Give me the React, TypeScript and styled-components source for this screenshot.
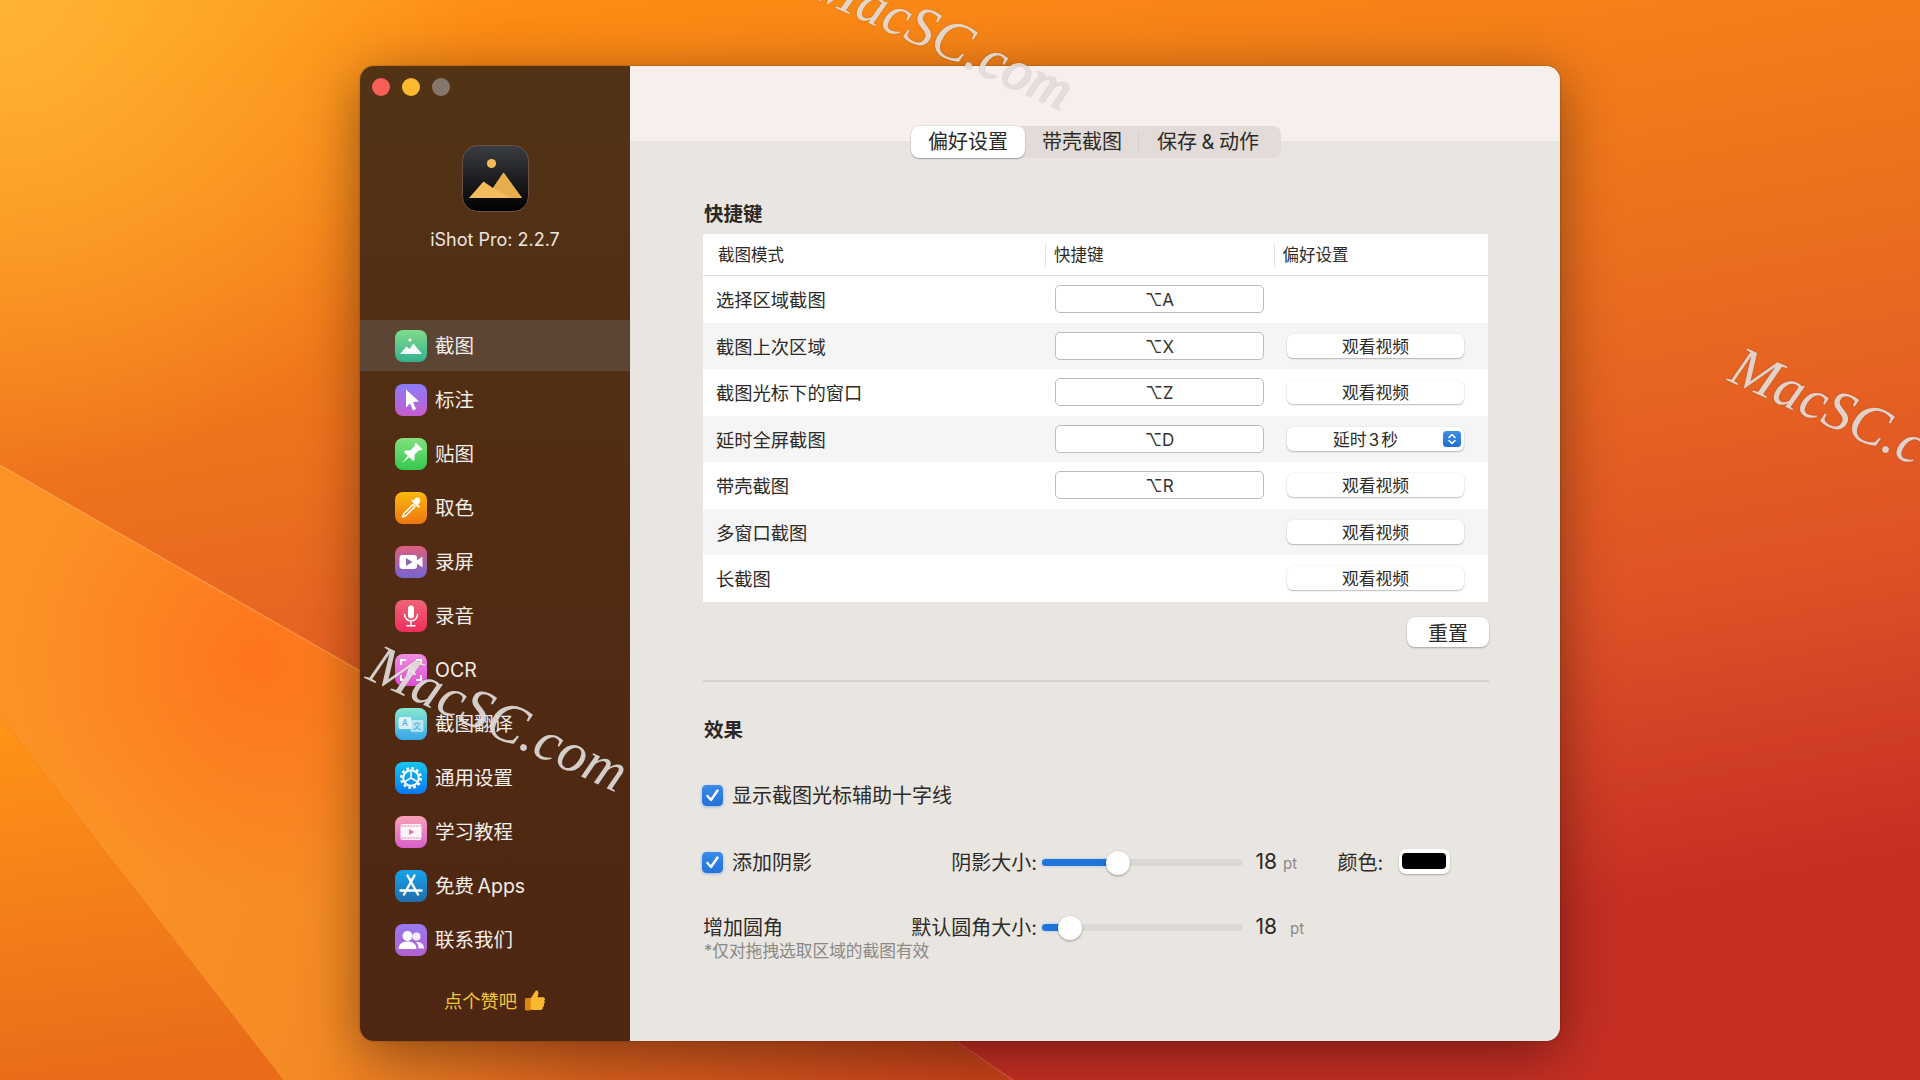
import React from "react";
import styled, { createGlobalStyle } from "styled-components";

const FONT = `Inter, "Noto Sans CJK SC", "DejaVu Sans", sans-serif`;

const Global = createGlobalStyle`
  html, body { margin: 0; padding: 0; background: #d9661f; }
  * { box-sizing: border-box; }
  #root { width: 1920px; height: 1080px; }
`;

const Page = styled.div`
  position: relative;
  width: 1920px;
  height: 1080px;
  overflow: hidden;
  padding: 66px 0 0 360px;
  font-family: ${FONT};
  color: #2d2a28;
`;

const WallpaperSvg = styled.svg`
  position: absolute;
  inset: 0;
  display: block;
`;

const Window = styled.div`
  position: relative;
  display: flex;
  width: 1200px;
  height: 975px;
  border-radius: 14px;
  overflow: hidden;
  box-shadow: 0 12px 55px rgba(0, 0, 0, 0.42), 0 0 2px rgba(0, 0, 0, 0.35);
`;

const Sidebar = styled.aside`
  width: 270px;
  flex: none;
  display: flex;
  flex-direction: column;
  align-items: stretch;
  background: linear-gradient(180deg, #523315 0%, #512c13 45%, #4e2612 100%);
  color: #f2ece6;
`;

const TrafficLights = styled.div`
  display: flex;
  gap: 12px;
  padding: 12px 0 0 12px;
`;

const Light = styled.span<{ $color: string }>`
  width: 18px;
  height: 18px;
  border-radius: 50%;
  background: ${(p) => p.$color};
`;

const LogoWrap = styled.div`
  margin: 49px auto 0;
  width: 67px;
  height: 67px;
`;

const AppName = styled.div`
  margin-top: 16px;
  height: 24px;
  line-height: 24px;
  text-align: center;
  font-size: 18px;
  color: #ece6e0;
`;

const Nav = styled.nav`
  margin-top: 67.5px;
  display: flex;
  flex-direction: column;
  gap: 3px;
`;

const NavItem = styled.div<{ $active?: boolean }>`
  height: 51px;
  display: flex;
  align-items: center;
  gap: 8px;
  padding: 1.5px 0 0 35px;
  font-size: 19.5px;
  line-height: 24px;
  word-spacing: -2px;
  color: #f3eee9;
  background: ${(p) => (p.$active ? "#5d4536" : "transparent")};
`;

const IconTile = styled.span<{ $from: string; $to: string }>`
  width: 32px;
  height: 32px;
  flex: none;
  border-radius: 8px;
  display: block;
  background: linear-gradient(180deg, ${(p) => p.$from}, ${(p) => p.$to});
  svg { display: block; }
`;

const Like = styled.div`
  margin-top: 23px;
  display: flex;
  align-items: center;
  justify-content: center;
  gap: 6px;
  height: 24px;
  font-size: 18.3px;
  color: #f3c63d;
`;

const Main = styled.main`
  flex: 1;
  display: flex;
  flex-direction: column;
  padding: 60px 71px 0 73px;
  background: linear-gradient(180deg, #f6efec 0, #f6efec 75px, #e9e5e1 75px);
`;

const Tabs = styled.div`
  align-self: center;
  display: flex;
  align-items: center;
  width: 370px;
  height: 32px;
  border-radius: 8px;
  background: #e2dbd7;
`;

const Tab = styled.div<{ $active?: boolean; $w: number; $pr?: number }>`
  width: ${(p) => p.$w}px;
  height: 32px;
  padding-right: ${(p) => p.$pr ?? 0}px;
  display: flex;
  align-items: center;
  justify-content: center;
  font-size: 20px;
  line-height: 32px;
  word-spacing: -1px;
  border-radius: 8px;
  background: ${(p) => (p.$active ? "#fff" : "transparent")};
  box-shadow: ${(p) => (p.$active ? "0 1px 1px rgba(0,0,0,.28), 0 0 0 .5px rgba(0,0,0,.1)" : "none")};
`;

const TabSep = styled.span`
  width: 1px;
  height: 18px;
  margin-left: -1px;
  background: #d2cbc7;
`;

const SectionTitle = styled.h2<{ $top: number }>`
  margin: ${(p) => p.$top}px 0 0;
  padding-left: 1px;
  height: 24px;
  line-height: 24px;
  font-size: 19.5px;
  font-weight: 700;
  color: #2a2725;
`;

const Table = styled.div`
  margin: 8px 1px 0 0;
  background: #fff;
`;

const HeadRow = styled.div`
  height: 42px;
  display: grid;
  grid-template-columns: 342px 228.5px 1fr;
  align-items: center;
  border-bottom: 1px solid #dedcda;
  font-size: 16.5px;
`;

const HeadCell = styled.div<{ $first?: boolean }>`
  height: 24px;
  line-height: 24px;
  padding-left: ${(p) => (p.$first ? "15px" : "8px")};
  border-left: ${(p) => (p.$first ? "none" : "1px solid #e6e4e2")};
`;

const Row = styled.div<{ $striped: boolean }>`
  height: 46.5px;
  display: grid;
  grid-template-columns: 352px 232px 177px;
  align-items: center;
  background: ${(p) => (p.$striped ? "#f5f5f5" : "#fff")};
`;

const RowName = styled.div`
  padding: 2px 0 0 13px;
  font-size: 18.3px;
  line-height: 24px;
`;

const Field = styled.div`
  width: 209px;
  height: 28px;
  padding: 2px 0 0 0;
  display: flex;
  align-items: center;
  justify-content: center;
  background: #fff;
  border: 1.5px solid #bdbcbb;
  border-radius: 5px;
  font-size: 17px;
  color: #333;
`;

const SmallButton = styled.div`
  position: relative;
  width: 177px;
  height: 24px;
  display: flex;
  align-items: center;
  justify-content: center;
  background: #fff;
  border-radius: 6px;
  font-size: 16.8px;
  color: #2d2a28;
  box-shadow: 0 1px 1.5px rgba(0, 0, 0, 0.24), 0 0 0 0.5px rgba(0, 0, 0, 0.06);
`;

const SelectButton = styled(SmallButton)`
  padding-right: 20px;
  word-spacing: -2.5px;
`;

const Stepper = styled.span`
  position: absolute;
  right: 3px;
  top: 4px;
  width: 18px;
  height: 16px;
  border-radius: 3.5px;
  background: linear-gradient(180deg, #3d8ee8, #1f6fd2);
  svg { display: block; }
`;

const ResetButton = styled.div`
  align-self: flex-end;
  margin-top: 15.5px;
  width: 82px;
  height: 30px;
  display: flex;
  align-items: center;
  justify-content: center;
  background: #fff;
  border-radius: 8px;
  font-size: 20px;
  box-shadow: 0 1px 2px rgba(0, 0, 0, 0.28), 0 0 0 0.5px rgba(0, 0, 0, 0.05);
`;

const Divider = styled.div`
  margin-top: 33px;
  height: 1.5px;
  background: #d6d1cd;
`;

const SettingRow = styled.div<{ $top: number }>`
  margin-top: ${(p) => p.$top}px;
  height: 24px;
  display: flex;
  align-items: center;
  font-size: 20px;
  line-height: 24px;
`;

const LeftGroup = styled.div`
  width: 334px;
  flex: none;
  display: flex;
  align-items: center;
  justify-content: space-between;
`;

const CheckGroup = styled.div`
  display: flex;
  align-items: center;
  gap: 9px;
`;

const CheckBox = styled.span`
  width: 21px;
  height: 21px;
  margin-left: -1px;
  border-radius: 4.5px;
  background: linear-gradient(180deg, #3b8bea, #2272d8);
  box-shadow: 0 1px 3px rgba(40, 120, 225, 0.45);
  svg { display: block; }
`;

const SliderTrack = styled.div`
  position: relative;
  margin-left: 5px;
  width: 201px;
  height: 7px;
  flex: none;
  border-radius: 4px;
  background: #dcd8d5;
`;

const SliderFill = styled.div`
  height: 7px;
  border-radius: 4px;
  background: #1f74da;
  box-shadow: 0 0 3px rgba(70, 150, 240, 0.45);
`;

const SliderThumb = styled.div`
  position: absolute;
  top: -8.5px;
  width: 24px;
  height: 24px;
  margin-left: -12px;
  border-radius: 50%;
  background: #fff;
  box-shadow: 0 1px 2.5px rgba(0, 0, 0, 0.35);
`;

const ValueBlock = styled.div`
  margin-left: 12.5px;
  width: 82px;
  flex: none;
  display: flex;
  align-items: baseline;
  font-size: 21px;
`;

const Unit = styled.span<{ $gap: number }>`
  margin-left: ${(p) => p.$gap}px;
  font-size: 15px;
  color: #8c8987;
`;

const ColorWell = styled.div`
  margin: -2px 0 0 16px;
  width: 51px;
  height: 25px;
  padding: 4px 4px 5px 3px;
  background: #fff;
  border-radius: 7px;
  box-shadow: 0 1px 2px rgba(0, 0, 0, 0.28);
`;

const ColorSwatch = styled.div`
  height: 16px;
  border-radius: 4px;
  background: #000;
`;

const Note = styled.div`
  margin-top: 0;
  padding-left: 1px;
  height: 22px;
  line-height: 22px;
  font-size: 16.7px;
  color: #8b8886;
`;

const Watermark = styled.span<{ $x: number; $y: number }>`
  position: absolute;
  left: ${(p) => p.$x}px;
  top: ${(p) => p.$y}px;
  transform: rotate(24.5deg);
  transform-origin: 0 100%;
  font-family: "Liberation Serif", serif;
  font-style: italic;
  font-size: 57px;
  line-height: 60px;
  white-space: nowrap;
  color: rgba(236, 232, 229, 0.86);
  text-shadow: 0 0 1.5px rgba(60, 50, 45, 0.4);
  pointer-events: none;
`;

const Wallpaper = () => (
  <WallpaperSvg width="1920" height="1080" viewBox="0 0 1920 1080">
    <defs>
      <linearGradient id="wpBase" x1="0" y1="0" x2="0.32" y2="1">
        <stop offset="0" stopColor="#ff9a18" />
        <stop offset="0.1" stopColor="#fc8b14" />
        <stop offset="0.45" stopColor="#ec701e" />
        <stop offset="0.75" stopColor="#df5226" />
        <stop offset="1" stopColor="#c62f24" />
      </linearGradient>
      <radialGradient id="wpGlow" gradientUnits="userSpaceOnUse" cx="0" cy="0" r="480">
        <stop offset="0" stopColor="#ffb434" />
        <stop offset="1" stopColor="#ffb434" stopOpacity="0" />
      </radialGradient>
      <linearGradient id="wpBand" gradientUnits="userSpaceOnUse" x1="120" y1="800" x2="960" y2="1070">
        <stop offset="0" stopColor="#fb9226" />
        <stop offset="0.3" stopColor="#f48a24" />
        <stop offset="0.6" stopColor="#d9601e" />
        <stop offset="1" stopColor="#c8431a" />
      </linearGradient>
      <radialGradient id="wpBandHot" gradientUnits="userSpaceOnUse" cx="260" cy="660" r="240">
        <stop offset="0" stopColor="#ff741c" />
        <stop offset="1" stopColor="#ff741c" stopOpacity="0" />
      </radialGradient>
      <linearGradient id="wpLow" x1="0" y1="0" x2="0.1" y2="1">
        <stop offset="0" stopColor="#ff9517" />
        <stop offset="1" stopColor="#ea6c1a" />
      </linearGradient>
    </defs>
    <rect width="1920" height="1080" fill="url(#wpBase)" />
    <rect width="1920" height="1080" fill="url(#wpGlow)" />
    <polygon points="0,465 500,750 1013,1080 283,1080 0,716" fill="url(#wpBand)" />
    <polygon points="0,465 500,750 1013,1080 283,1080 0,716" fill="url(#wpBandHot)" />
    <polygon points="0,716 283,1080 0,1080" fill="url(#wpLow)" />
    <line x1="0" y1="465" x2="360" y2="671" stroke="#ffc890" strokeOpacity="0.35" strokeWidth="1.2" />
    <line x1="957" y1="1042" x2="1013" y2="1080" stroke="#ffa080" strokeOpacity="0.35" strokeWidth="1.2" />
  </WallpaperSvg>
);

const AppLogo = () => (
  <svg width="67" height="67" viewBox="0 0 67 67">
    <defs>
      <linearGradient id="lgBg" x1="0" y1="0" x2="0" y2="1">
        <stop offset="0" stopColor="#3a3d42" />
        <stop offset="0.55" stopColor="#1a1b1d" />
        <stop offset="1" stopColor="#000" />
      </linearGradient>
    </defs>
    <rect x="0.5" y="0.5" width="66" height="66" rx="15" fill="url(#lgBg)" stroke="#6b5140" />
    <circle cx="29.5" cy="18.5" r="4.6" fill="#f4b95a" />
    <path d="M7 53 L21.5 36.5 L31 43 L41.5 27.5 L60 53 Z" fill="#f5bc5c" />
    <path d="M41.5 27.5 L60 53 L49 53 L31 43 Z" fill="#e7ad4c" />
  </svg>
);

const S = { width: 32, height: 32, viewBox: "0 0 32 32" };

const IconShot = () => (
  <svg {...S}>
    <circle cx="15" cy="10" r="1.6" fill="#fff" />
    <path d="M5 24 L11.5 16.5 L14.5 19 L18.5 13.5 L27 24 Z" fill="#fff" fillOpacity="0.95" />
  </svg>
);
const IconCursor = () => (
  <svg {...S}>
    <path d="M11 5.5 L24 17.5 L18 18 L21 25 L18 26.5 L15 19.5 L11 23.5 Z" fill="#fff" />
  </svg>
);
const IconPin = () => (
  <svg {...S}>
    <g transform="rotate(45 16 16)" fill="#fff">
      <path d="M11.5 4.5 h9 v2 l-1.5 1 v6.5 l3.5 3.5 v2 H9.5 v-2 l3.5-3.5 V7.5 l-1.5-1 z" />
      <path d="M15 19.5 h2 L16 29 z" />
    </g>
  </svg>
);
const IconDropper = () => (
  <svg {...S}>
    <path d="M18 12.5 L8.8 21.7 L7.5 25 L10.8 23.7 L20 14.5 Z" fill="none" stroke="#fff" strokeWidth="1.5" strokeLinejoin="round" />
    <path d="M16.5 9 L23.5 16 L25 14.5 L23 12.5 C26 10.5 25.5 7 24 6 C22.5 5 20 5.5 19 8.5 L17.5 7.5 Z" fill="#fff" />
  </svg>
);
const IconVideo = () => (
  <svg {...S}>
    <rect x="4.5" y="9" width="17.5" height="14" rx="3" fill="#fff" />
    <path d="M22 14.5 L27.5 10.5 V21.5 L22 17.5 Z" fill="#fff" />
    <path d="M11 12 L17.5 16 L11 20 Z" fill="#8a6cb0" />
  </svg>
);
const IconMic = () => (
  <svg {...S}>
    <rect x="13" y="5.5" width="6" height="13" rx="3" fill="#fff" />
    <path d="M9.5 14.5 a6.5 6.5 0 0 0 13 0 M16 21 V25.5 M12 25.8 H20" fill="none" stroke="#fff" strokeWidth="1.6" strokeLinecap="round" />
  </svg>
);
const IconOcr = () => (
  <svg {...S}>
    <path d="M6 11 V6 H11 M21 6 H26 V11 M26 21 V26 H21 M11 26 H6 V21" fill="none" stroke="#fff" strokeWidth="2" />
    <text x="16" y="21" textAnchor="middle" fontSize="13" fontFamily="Inter, sans-serif" fontWeight="700" fill="#fff">A</text>
  </svg>
);
const IconTranslate = () => (
  <svg {...S}>
    <rect x="3.5" y="9" width="13" height="12" rx="2" fill="#fff" fillOpacity="0.75" />
    <rect x="15.5" y="12" width="13" height="12" rx="2" fill="#fff" fillOpacity="0.55" />
    <text x="10" y="18" textAnchor="middle" fontSize="8.5" fontFamily="Inter, sans-serif" fill="#4aa4d8">A</text>
    <text x="22" y="21" textAnchor="middle" fontSize="8" fontFamily="'Noto Sans CJK SC', sans-serif" fill="#4aa4d8">文</text>
  </svg>
);
const IconGear = () => (
  <svg {...S}>
    <circle cx="16" cy="16" r="9.8" fill="none" stroke="#fff" strokeWidth="2.4" strokeDasharray="2.7 2.43" />
    <circle cx="16" cy="16" r="7.8" fill="none" stroke="#fff" strokeWidth="2" />
    <path d="M16 16 L16 9 M16 16 L10 19.5 M16 16 L22 19.5" stroke="#fff" strokeWidth="1.5" />
  </svg>
);
const IconFilm = () => (
  <svg {...S}>
    <rect x="5.5" y="8" width="21" height="16" rx="2" fill="#fff" fillOpacity="0.92" />
    <path d="M6.5 10 H25.5 M6.5 22 H25.5" stroke="#e88ac0" strokeWidth="1.4" strokeDasharray="1.6 1.4" />
    <path d="M14 13 L19.5 16 L14 19 Z" fill="#e077b0" />
  </svg>
);
const IconStore = () => (
  <svg {...S}>
    <path d="M19.5 5.5 L9 24.5 M12.5 5.5 L23 24.5 M5.5 20.5 H26.5" fill="none" stroke="#fff" strokeWidth="2.4" strokeLinecap="round" />
  </svg>
);
const IconPeople = () => (
  <svg {...S}>
    <circle cx="21.5" cy="12.5" r="4" fill="#fff" fillOpacity="0.9" />
    <path d="M22 18 c4 0 7 2 7 6.5 h-5.5 c0-2.5-.8-4.8-2.5-6.5 z" fill="#fff" fillOpacity="0.9" />
    <circle cx="12.5" cy="12" r="5" fill="#fff" />
    <path d="M3.5 25 c0-5 4-7.5 9-7.5 s9 2.5 9 7.5 z" fill="#fff" />
  </svg>
);

const ThumbUp = () => (
  <svg width="23" height="24" viewBox="0 0 24 24">
    <rect x="2" y="10" width="7" height="13" rx="1.5" fill="#d98516" />
    <path d="M8 10.5 L13 2.5 C15 1.5 16.5 3 16 5.5 L15.3 9 H21 C23 9 23.5 11.5 22 12.5 C23.3 13.7 23 15.5 21.7 16 C22.3 17.3 22 18.8 20.7 19.3 C21 20.8 20 22.5 18.5 22.5 H12 C10 22.5 8 21.5 8 21 Z" fill="#f8b92e" />
  </svg>
);

const navItems = [
  { label: "截图", from: "#7fdc8c", to: "#35b08e", Icon: IconShot },
  { label: "标注", from: "#8a7cf8", to: "#c75ccd", Icon: IconCursor },
  { label: "贴图", from: "#82e07e", to: "#35c94e", Icon: IconPin },
  { label: "取色", from: "#fdb80c", to: "#ee760f", Icon: IconDropper },
  { label: "录屏", from: "#df5f7c", to: "#7663d2", Icon: IconVideo },
  { label: "录音", from: "#ee6478", to: "#f02e5c", Icon: IconMic },
  { label: "OCR", from: "#f28ce2", to: "#de4fd6", Icon: IconOcr },
  { label: "截图翻译", from: "#88e8d0", to: "#38a6ea", Icon: IconTranslate },
  { label: "通用设置", from: "#16c6f0", to: "#0a78f0", Icon: IconGear },
  { label: "学习教程", from: "#f8a2b8", to: "#d85fc8", Icon: IconFilm },
  { label: "免费 Apps", from: "#18a2ea", to: "#1f6eae", Icon: IconStore },
  { label: "联系我们", from: "#987af0", to: "#b260d0", Icon: IconPeople },
];

const shortcuts: { name: string; key?: string; action?: "video" | "delay" }[] = [
  { name: "选择区域截图", key: "⌥A" },
  { name: "截图上次区域", key: "⌥X", action: "video" },
  { name: "截图光标下的窗口", key: "⌥Z", action: "video" },
  { name: "延时全屏截图", key: "⌥D", action: "delay" },
  { name: "带壳截图", key: "⌥R", action: "video" },
  { name: "多窗口截图", action: "video" },
  { name: "长截图", action: "video" },
];

const Slider = ({ value }: { value: number }) => (
  <SliderTrack>
    <SliderFill style={{ width: `${value}%` }} />
    <SliderThumb style={{ left: `${value}%` }} />
  </SliderTrack>
);

const Check = () => (
  <CheckBox>
    <svg width="21" height="21" viewBox="0 0 21 21">
      <path d="M5.5 11 L9 15 L15.5 5.5" fill="none" stroke="#fff" strokeWidth="2.4" strokeLinecap="round" strokeLinejoin="round" />
    </svg>
  </CheckBox>
);

export default function App() {
  return (
    <Page>
      <Global />
      <Wallpaper />
      <Window>
        <Sidebar>
          <TrafficLights>
            <Light $color="#f75f58" />
            <Light $color="#fbb92e" />
            <Light $color="#83776e" />
          </TrafficLights>
          <LogoWrap>
            <AppLogo />
          </LogoWrap>
          <AppName>iShot Pro: 2.2.7</AppName>
          <Nav>
            {navItems.map(({ label, from, to, Icon }, i) => (
              <NavItem key={label} $active={i === 0}>
                <IconTile $from={from} $to={to}>
                  <Icon />
                </IconTile>
                {label}
              </NavItem>
            ))}
          </Nav>
          <Like>
            点个赞吧
            <ThumbUp />
          </Like>
        </Sidebar>
        <Main>
          <Tabs>
            <Tab $active $w={114}>偏好设置</Tab>
            <Tab $w={114}>带壳截图</Tab>
            <TabSep />
            <Tab $w={142} $pr={4}>保存 &amp; 动作</Tab>
          </Tabs>
          <SectionTitle $top={44}>快捷键</SectionTitle>
          <Table>
            <HeadRow>
              <HeadCell $first>截图模式</HeadCell>
              <HeadCell>快捷键</HeadCell>
              <HeadCell>偏好设置</HeadCell>
            </HeadRow>
            {shortcuts.map((s, i) => (
              <Row key={s.name} $striped={i % 2 === 1}>
                <RowName>{s.name}</RowName>
                <div>{s.key && <Field>{s.key}</Field>}</div>
                {s.action === "video" && <SmallButton>观看视频</SmallButton>}
                {s.action === "delay" && (
                  <SelectButton>
                    延时 3 秒
                    <Stepper>
                      <svg width="18" height="16" viewBox="0 0 18 16">
                        <path d="M6 6.5 L9 3.5 L12 6.5 M6 9.5 L9 12.5 L12 9.5" fill="none" stroke="#fff" strokeWidth="1.6" strokeLinecap="round" strokeLinejoin="round" />
                      </svg>
                    </Stepper>
                  </SelectButton>
                )}
              </Row>
            ))}
          </Table>
          <ResetButton>重置</ResetButton>
          <Divider />
          <SectionTitle $top={36}>效果</SectionTitle>
          <SettingRow $top={42}>
            <CheckGroup>
              <Check />
              显示截图光标辅助十字线
            </CheckGroup>
          </SettingRow>
          <SettingRow $top={43}>
            <LeftGroup>
              <CheckGroup>
                <Check />
                添加阴影
              </CheckGroup>
              <span>阴影大小:</span>
            </LeftGroup>
            <Slider value={38} />
            <ValueBlock>
              18<Unit $gap={6}>pt</Unit>
            </ValueBlock>
            <span>颜色:</span>
            <ColorWell>
              <ColorSwatch />
            </ColorWell>
          </SettingRow>
          <SettingRow $top={41}>
            <LeftGroup>
              <span>增加圆角</span>
              <span>默认圆角大小:</span>
            </LeftGroup>
            <Slider value={14} />
            <ValueBlock>
              18<Unit $gap={13}>pt</Unit>
            </ValueBlock>
          </SettingRow>
          <Note>*仅对拖拽选取区域的截图有效</Note>
        </Main>
      </Window>
      <Watermark $x={805} $y={-54}>MacSC.com</Watermark>
      <Watermark $x={1722} $y={330}>MacSC.com</Watermark>
      <Watermark $x={360} $y={628}>MacSC.com</Watermark>
    </Page>
  );
}
